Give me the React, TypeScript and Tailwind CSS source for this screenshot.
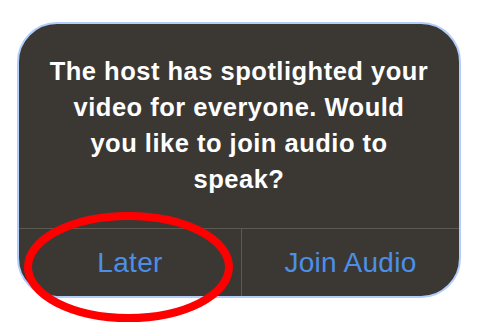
import React from 'react'

const lines = [
  'The host has spotlighted your',
  'video for everyone. Would',
  'you like to join audio to',
  'speak?',
]

export default function App() {
  return (
    <div className="w-[488px] h-[330px] bg-white overflow-hidden" style={{ fontFamily: '"Liberation Sans", Arial, sans-serif' }}>
      <div className="relative pt-[22px] pl-[17px]">
        {/* Dialog */}
        <div className="w-[444px] h-[276px] rounded-[40px] border-2 border-[#b3cdfa] bg-[#3b3834] flex flex-col overflow-hidden">
          <div className="flex-1 flex flex-col items-center pt-[29px] text-white font-bold text-[25.5px] leading-[36px] tracking-[0.5px]">
            {lines.map(l => (
              <div key={l} className="whitespace-nowrap">{l}</div>
            ))}
          </div>
          <div className="h-[68px] border-t border-[#5c5852] flex text-[#4b8fe9] text-[28px] leading-[28px] tracking-[0.3px]">
            <div className="w-[223px] flex items-center justify-center border-r border-[#5c5852]">Later</div>
            <div className="flex-1 flex items-center justify-center">Join Audio</div>
          </div>
        </div>

        {/* Red annotation circle */}
        <svg className="absolute left-0 top-0 pointer-events-none" width="488" height="330" viewBox="0 0 488 330">
          <ellipse cx="128.5" cy="267" rx="100.5" ry="51" fill="none" stroke="#ff0000" strokeWidth="8" />
        </svg>
      </div>
    </div>
  )
}
